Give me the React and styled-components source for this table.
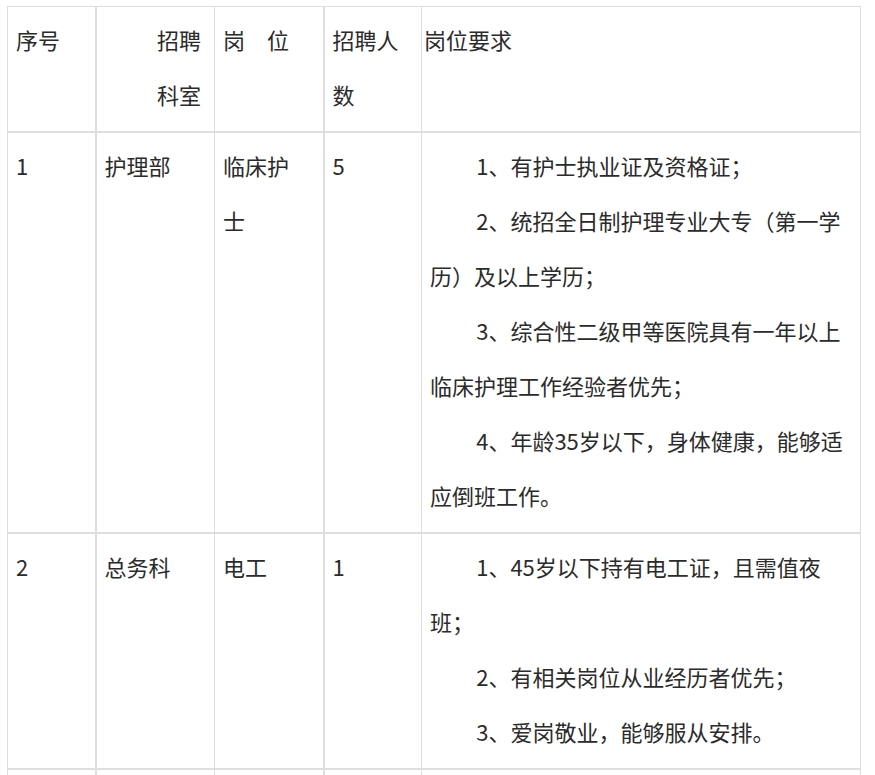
import React from 'react'
import styled, { createGlobalStyle } from 'styled-components'

const GlobalStyle = createGlobalStyle`
  body {
    margin: 0;
    background: #fff;
    font-family: "Noto Sans CJK SC", "Noto Sans", sans-serif;
    color: #2b2b2b;
  }
`

const Wrap = styled.div`
  padding: 6px 0 0 7px;
`

const Table = styled.table`
  border-collapse: collapse;
  table-layout: fixed;
  width: 853px;
  font-size: 22px;
  line-height: 55px;
`

const Row = styled.tr`
  border-top: 2px solid #dedede;
  &:first-child {
    border-top: 1px solid #dedede;
  }
`

const Cell = styled.td`
  vertical-align: top;
  padding: 5px ${({ $padR }) => $padR || 8}px 9px ${({ $padL }) => $padL || 8}px;
  border-left: ${({ $thick }) => ($thick ? 2 : 1)}px solid #dedede;
  border-right: 1px solid #dedede;
  text-align: ${({ $align }) => $align || 'left'};
  word-break: break-all;
  height: ${({ $h }) => ($h ? `${$h}px` : 'auto')};
`

const Para = styled.p`
  margin: 0;
  text-indent: ${({ $indent }) => ($indent ? '2.1em' : '0')};
`

const cols = [88, 119, 109, 98, 439]

const rows = [
  {
    no: '1',
    dept: '护理部',
    post: '临床护士',
    count: '5',
    reqs: [
      '1、有护士执业证及资格证；',
      '2、统招全日制护理专业大专（第一学历）及以上学历；',
      '3、综合性二级甲等医院具有一年以上临床护理工作经验者优先；',
      '4、年龄35岁以下，身体健康，能够适应倒班工作。'
    ]
  },
  {
    no: '2',
    dept: '总务科',
    post: '电工',
    count: '1',
    reqs: [
      '1、45岁以下持有电工证，且需值夜班；',
      '2、有相关岗位从业经历者优先；',
      '3、爱岗敬业，能够服从安排。'
    ]
  }
]

const App = () => {
  return (
    <>
      <GlobalStyle />
      <Wrap>
        <Table>
          <colgroup>
            {cols.map((w, i) => <col key={i} style={{ width: w }} />)}
          </colgroup>
          <tbody>
            <Row>
              <Cell>序号</Cell>
              <Cell $thick $align='right' $padR={13}>招聘<br />科室</Cell>
              <Cell>岗　位</Cell>
              <Cell $thick>招聘人数</Cell>
              <Cell $padL={2}>岗位要求</Cell>
            </Row>
            {rows.map((r) => (
              <Row key={r.no}>
                <Cell>{r.no}</Cell>
                <Cell $thick>{r.dept}</Cell>
                <Cell $padR={14}>{r.post}</Cell>
                <Cell $thick>{r.count}</Cell>
                <Cell>
                  {r.reqs.map((q, i) => (
                    <Para key={i} $indent>{q}</Para>
                  ))}
                </Cell>
              </Row>
            ))}
            <Row>
              <Cell $h={40} />
              <Cell $thick />
              <Cell />
              <Cell $thick />
              <Cell />
            </Row>
          </tbody>
        </Table>
      </Wrap>
    </>
  )
}

export default App
